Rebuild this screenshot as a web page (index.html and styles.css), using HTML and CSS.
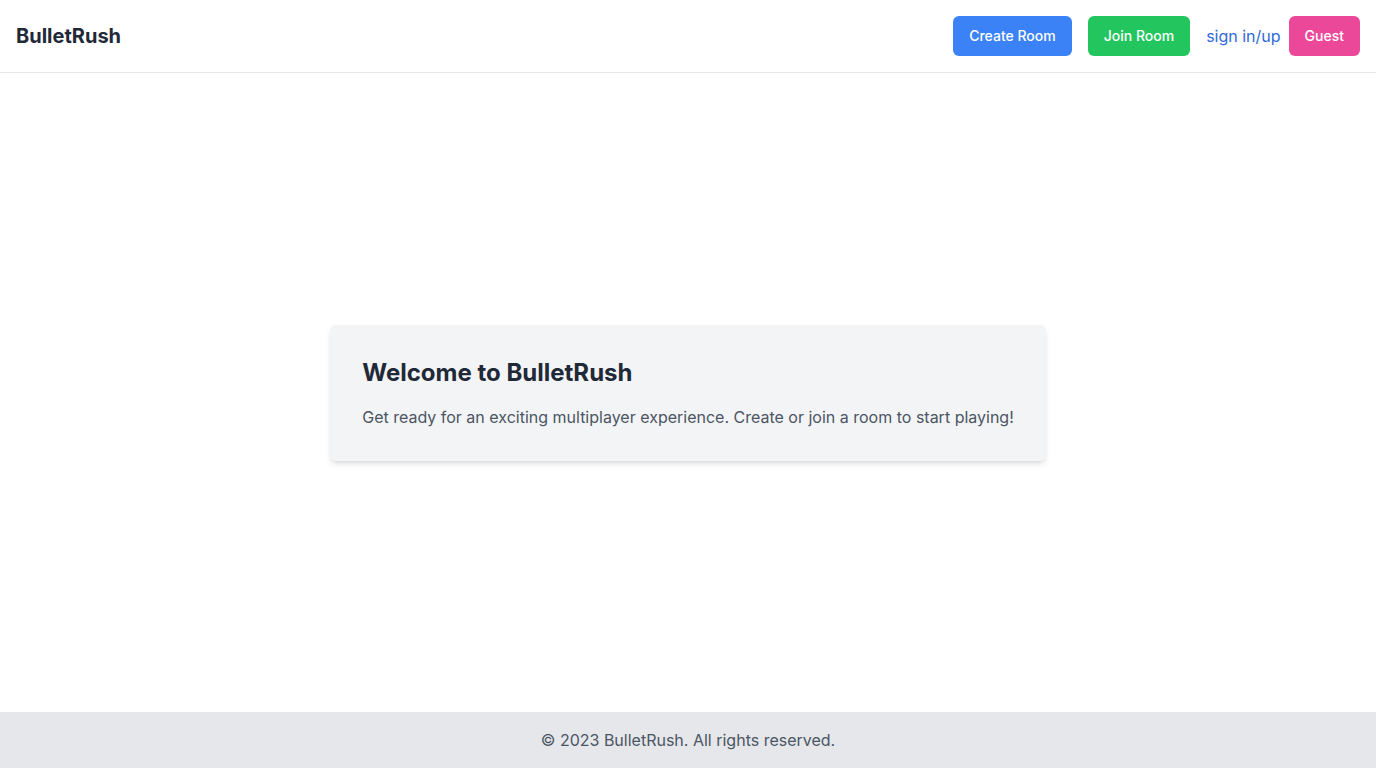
FILE: index.html
```html
<!DOCTYPE html>
<html lang="en">
<head>
<meta charset="utf-8">
<title>BulletRush</title>
<link rel="stylesheet" href="styles.css">
</head>
<body>
<div class="page">
  <header class="header">
    <div class="brand">BulletRush</div>
    <nav class="nav">
      <button class="btn btn-blue">Create Room</button>
      <button class="btn btn-green">Join Room</button>
      <div class="auth">
        <a class="link" href="#">sign in/up</a>
        <button class="btn btn-pink">Guest</button>
      </div>
    </nav>
  </header>
  <main class="main">
    <section class="card">
      <h1 class="card-title">Welcome to BulletRush</h1>
      <p class="card-text">Get ready for an exciting multiplayer experience. Create or join a room to start playing!</p>
    </section>
  </main>
  <footer class="footer">© 2023 BulletRush. All rights reserved.</footer>
</div>
</body>
</html>
```

FILE: styles.css
```css
* { box-sizing: border-box; }
html, body { margin: 0; padding: 0; }
body {
  font-family: Inter, "Noto Sans", "Liberation Sans", sans-serif;
  color: #1f2937;
  background: #ffffff;
}
.page {
  min-height: 100vh;
  display: flex;
  flex-direction: column;
}
.header {
  height: 73px;
  display: flex;
  align-items: center;
  justify-content: space-between;
  padding: 0 16px;
  border-bottom: 1px solid #e5e7eb;
}
.brand {
  font-size: 20px;
  font-weight: 700;
  line-height: 28px;
  color: #1f2937;
}
.nav {
  display: flex;
  align-items: center;
  gap: 16px;
}
.auth {
  display: flex;
  align-items: center;
  gap: 8px;
}
.btn {
  font-family: inherit;
  font-size: 14px;
  font-weight: 500;
  line-height: 20px;
  color: #ffffff;
  border: none;
  border-radius: 6px;
  height: 40px;
  padding: 0 16px;
  cursor: pointer;
}
.btn-blue { background: #3b82f6; }
.btn-green { background: #22c55e; }
.btn-pink { background: #ec4899; }
.link {
  font-size: 16px;
  line-height: 24px;
  color: #2f6ad9;
  text-decoration: none;
}
.main {
  flex: 1;
  display: flex;
  align-items: center;
  justify-content: center;
}
.card {
  width: fit-content;
  background: #f3f4f6;
  border-radius: 6px;
  padding: 32px;
  box-shadow: 0 4px 6px -1px rgba(0,0,0,0.1), 0 2px 4px -2px rgba(0,0,0,0.1);
}
.card-title {
  margin: 0 0 16px;
  font-size: 24px;
  line-height: 32px;
  font-weight: 700;
  color: #1f2937;
}
.card-text {
  margin: 0;
  font-size: 16px;
  line-height: 24px;
  color: #4b5563;
}
.footer {
  height: 56px;
  background: #e5e7eb;
  display: flex;
  align-items: center;
  justify-content: center;
  font-size: 16px;
  color: #4b5563;
}
```
